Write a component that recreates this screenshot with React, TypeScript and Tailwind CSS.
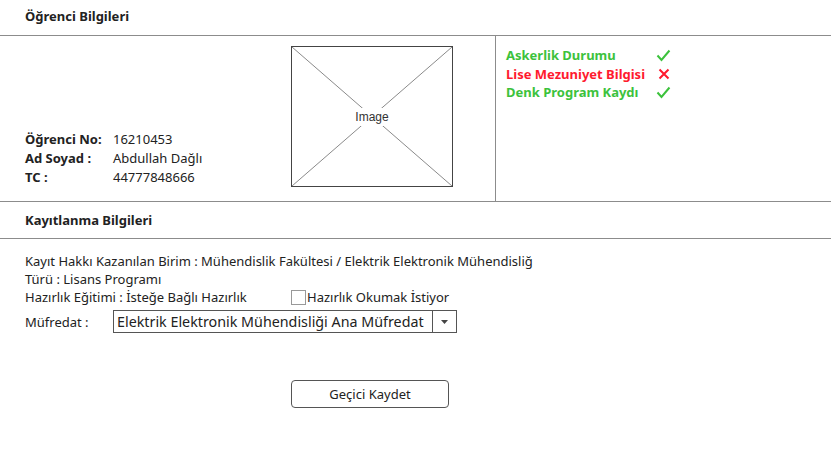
import React from "react";

const Check = () => (
  <svg width="15" height="13" viewBox="0 0 15 13" className="block">
    <path d="M1.5 6.5 L5.5 11 L13.5 1.5" fill="none" stroke="#3cc23c" strokeWidth="2" />
  </svg>
);
const Cross = () => (
  <svg width="12" height="12" viewBox="0 0 12 12" className="block">
    <path d="M1.5 1.5 L10.5 10.5 M10.5 1.5 L1.5 10.5" fill="none" stroke="#ff1a2e" strokeWidth="2" />
  </svg>
);

export default function App() {
  return (
    <div className="w-[831px] h-[453px] bg-white text-[#222] text-[13px] leading-[18px] [font-family:'Noto_Sans',sans-serif]">
      <div className="h-[36px] px-[25px] pb-[3px] flex items-center font-bold border-b border-[#8c8c8c]">Öğrenci Bilgileri</div>
      <div className="flex h-[166px] border-b border-[#8c8c8c]">
        <div className="w-[496px] flex border-r border-[#8c8c8c] pb-[14px]">
          <div className="w-[291px] pl-[25px] flex flex-col justify-end leading-[19px]">
            <div className="flex"><span className="w-[88px] font-bold">Öğrenci No:</span><span>16210453</span></div>
            <div className="flex"><span className="w-[88px] font-bold">Ad Soyad :</span><span>Abdullah Dağlı</span></div>
            <div className="flex"><span className="w-[88px] font-bold">TC :</span><span>44777848666</span></div>
          </div>
          <div className="mt-[10px] relative w-[162px] h-[141px] border border-[#444] flex items-center justify-center">
            <svg className="absolute inset-0" width="160" height="139" viewBox="0 0 160 139">
              <line x1="0" y1="0" x2="160" y2="139" stroke="#8a8a8a" strokeWidth="1" />
              <line x1="160" y1="0" x2="0" y2="139" stroke="#8a8a8a" strokeWidth="1" />
            </svg>
            <span className="relative bg-white px-[3px] text-[12px] [font-family:'Liberation_Sans',sans-serif] text-[#333]">Image</span>
          </div>
        </div>
        <div className="pl-[10px] pt-[10px] flex flex-col font-bold leading-[18.5px]">
          <div className="flex items-center"><span className="w-[150px] text-[#3cc23c]">Askerlik Durumu</span><Check /></div>
          <div className="flex items-center"><span className="w-[152px] text-[#ff1a2e]">Lise Mezuniyet Bilgisi</span><Cross /></div>
          <div className="flex items-center"><span className="w-[150px] text-[#3cc23c]">Denk Program Kaydı</span><Check /></div>
        </div>
      </div>
      <div className="h-[37px] px-[25px] flex items-center font-bold border-b border-[#8c8c8c]">Kayıtlanma Bilgileri</div>
      <div className="pl-[25px] pt-[13px]">
        <div>Kayıt Hakkı Kazanılan Birim : Mühendislik Fakültesi / Elektrik Elektronik Mühendisliğ</div>
        <div>Türü : Lisans Programı</div>
        <div className="flex items-center">
          <span className="w-[266px]">Hazırlık Eğitimi : İsteğe Bağlı Hazırlık</span>
          <span className="w-[15px] h-[15px] border border-[#999] mr-[1px]"></span>
          <span>Hazırlık Okumak İstiyor</span>
        </div>
        <div className="flex items-center mt-[4px]">
          <span className="w-[88px]">Müfredat :</span>
          <div className="flex h-[23px] w-[344px] border border-[#555]">
            <div className="flex-1 px-[3px] flex items-center text-[14.3px] whitespace-nowrap overflow-hidden">Elektrik Elektronik Mühendisliği Ana Müfredat</div>
            <div className="w-[24px] border-l border-[#555] flex items-center justify-center">
              <svg width="7" height="4" viewBox="0 0 7 4"><path d="M0 0 L7 0 L3.5 4 Z" fill="#444" /></svg>
            </div>
          </div>
        </div>
        <div className="flex justify-start pl-[266px] mt-[47px]">
          <button className="w-[158px] h-[28px] border border-[#555] rounded-[4px] bg-white">Geçici Kaydet</button>
        </div>
      </div>
    </div>
  );
}
